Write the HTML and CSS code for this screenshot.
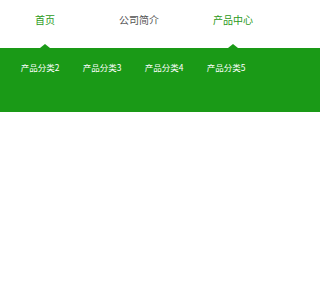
FILE: index.html
```html
<!DOCTYPE html>
<html lang="zh">
<head>
<meta charset="utf-8">
<link rel="stylesheet" href="styles.css">
</head>
<body>
<div class="nav">
  <div class="nav-item active"><span>首页</span><i class="tri"></i></div>
  <div class="nav-item"><span>公司简介</span></div>
  <div class="nav-item active"><span>产品中心</span><i class="tri"></i></div>
</div>
<div class="sub">
  <div class="sub-item">产品分类2</div>
  <div class="sub-item">产品分类3</div>
  <div class="sub-item">产品分类4</div>
  <div class="sub-item">产品分类5</div>
</div>
</body>
</html>
```
FILE: styles.css
```css
html, body {
  margin: 0;
  padding: 0;
  background: #fff;
  font-family: "Noto Sans CJK SC", "Noto Sans", sans-serif;
}
.nav {
  display: flex;
  height: 48px;
  margin-left: -2px;
}
.nav-item {
  position: relative;
  width: 94px;
  flex: none;
  display: flex;
  justify-content: center;
  padding-top: 13px;
  box-sizing: border-box;
  font-size: 10px;
  line-height: 14px;
  color: #555;
}
.nav-item.active {
  color: #2c9a20;
}
.tri {
  position: absolute;
  left: 50%;
  bottom: 0;
  margin-left: -5px;
  width: 0;
  height: 0;
  border-left: 5px solid transparent;
  border-right: 5px solid transparent;
  border-bottom: 4px solid #1a9a17;
}
.sub {
  height: 64px;
  background: #1a9a17;
  display: flex;
  padding-left: 9px;
  padding-top: 13px;
  box-sizing: border-box;
}
.sub-item {
  width: 62px;
  flex: none;
  text-align: center;
  color: #fff;
  font-size: 8.5px;
  line-height: 12px;
}
```
